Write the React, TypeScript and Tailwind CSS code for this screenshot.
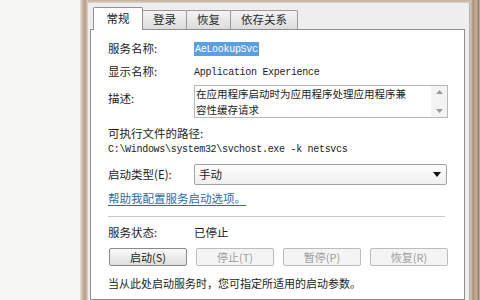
const CJK = "font-['Noto_Sans_CJK_SC','Noto_Sans',sans-serif]";
const MONO = "font-['Liberation_Mono','Noto_Sans_CJK_SC',monospace] text-[10px] tracking-[-0.3px]";

function Tab({ label, active }: { label: string; active?: boolean }) {
  if (active) {
    return (
      <div className="relative z-10 -mb-px h-[23px] w-[50px] flex items-center justify-center bg-white border border-b-0 border-[#8e8f8f] rounded-t-[2px] text-[11.5px] text-[#1b1b1b]">
        {label}
      </div>
    );
  }
  return (
    <div className="h-[19px] -ml-px px-[10px] flex items-center justify-center bg-[linear-gradient(#f4f4f4,#dcdcdc)] border border-b-0 border-[#9a9a9a] rounded-t-[2px] text-[11.5px] text-[#2a2a2a]">
      {label}
    </div>
  );
}

function Btn({ label, disabled }: { label: string; disabled?: boolean }) {
  return (
    <div
      className={`w-[78px] h-[18px] flex items-center justify-center rounded-[2px] border text-[11px] ${
        disabled
          ? 'border-[#bcbcbc] bg-[#f4f4f4] text-[#9d9d9d]'
          : 'border-[#8a8a8a] bg-[linear-gradient(#fafafa,#dedede)] text-[#1e1e1e]'
      }`}
    >
      {label}
    </div>
  );
}

export default function App() {
  return (
    <div className={`w-[480px] h-[300px] flex overflow-hidden bg-[#f8f8f6] ${CJK}`}>
      {/* desktop behind */}
      <div className="w-[80px] bg-[#f7f7f5]" />

      {/* left window frame */}
      <div className="w-[8px] bg-[linear-gradient(90deg,#e8dfd5,#c4ad98_40%,#b49b86_60%,#dcd2c6)]" />

      <div className="flex-1 flex flex-col bg-[#cdbfb0]">
        <div className="h-[3px] bg-[linear-gradient(#bfae9c,#ddd3c8)]" />
        <div className="flex-1 flex bg-[#eeeeee]">
          <div className="flex-1 flex flex-col pl-[2px] pr-[4px]">
            {/* tabs */}
            <div className="flex items-end pl-[3px] mt-[4px]">
              <Tab label="常规" active />
              <Tab label="登录" />
              <Tab label="恢复" />
              <Tab label="依存关系" />
            </div>

            {/* tab page */}
            <div className="flex-1 bg-white border border-[#8e8f8f] pl-[17px] text-[11.5px] text-[#1c1c1c]">
              <div className="flex items-center h-[16px] mt-[11px]">
                <span className="w-[86px]">服务名称:</span>
                <span className={`${MONO} bg-[#5a9fe0] text-white px-px h-[14px] flex items-center`}>AeLookupSvc</span>
              </div>

              <div className="flex items-center h-[16px] mt-[7px]">
                <span className="w-[86px]">显示名称:</span>
                <span className={MONO}>Application Experience</span>
              </div>

              <div className="flex mt-[5px]">
                <span className="w-[86px] pt-[5px]">描述:</span>
                <div className="w-[254px] h-[33px] border border-[#b8b8b8] flex">
                  <div className="flex-1 pl-[1px] text-[10.5px] leading-[16px]">
                    <div>在应用程序启动时为应用程序处理应用程序兼</div>
                    <div>容性缓存请求</div>
                  </div>
                  <div className="w-[16px] bg-[#f3f3f3] flex flex-col items-center justify-between py-[4px] text-[#9a9a9a]">
                    <svg width="7" height="4" viewBox="0 0 7 4"><path d="M0 4L3.5 0L7 4Z" fill="currentColor" /></svg>
                    <svg width="7" height="4" viewBox="0 0 7 4"><path d="M0 0L3.5 4L7 0Z" fill="currentColor" /></svg>
                  </div>
                </div>
              </div>

              <div className="h-[16px] flex items-center mt-[8px]">可执行文件的路径:</div>
              <div className={`h-[14px] flex items-center ${MONO} text-[#1c1c1c]`}>
                C:\Windows\system32\svchost.exe -k netsvcs
              </div>

              <div className="flex items-center mt-[8px]">
                <span className="w-[86px]">启动类型(E):</span>
                <div className="w-[253px] h-[21px] border border-[#a4a4a4] rounded-[2px] bg-[linear-gradient(#fdfdfd,#f0f0f0)] flex items-center pl-[4px] pr-[5px]">
                  <span className="flex-1">手动</span>
                  <svg width="8" height="5" viewBox="0 0 8 5"><path d="M0 0H8L4 5Z" fill="#111" /></svg>
                </div>
              </div>

              <div className="h-[16px] flex items-center mt-[6px]">
                <span className="text-[#2f6ba8] underline underline-offset-2">帮助我配置服务启动选项。</span>
              </div>

              <div className="w-[337px] h-px bg-[#c9c9c9] mt-[9px]" />

              <div className="flex items-center h-[16px] mt-[8px]">
                <span className="w-[86px]">服务状态:</span>
                <span>已停止</span>
              </div>

              <div className="flex gap-[9px] mt-[7px] pl-[1px]">
                <Btn label="启动(S)" />
                <Btn label="停止(T)" disabled />
                <Btn label="暂停(P)" disabled />
                <Btn label="恢复(R)" disabled />
              </div>

              <div className="h-[16px] flex items-center mt-[9px] text-[11px]">
                当从此处启动服务时，您可指定所适用的启动参数。
              </div>
            </div>
          </div>
          <div className="w-px bg-[#b9b0a6]" />
        </div>
      </div>

      {/* right window frame */}
      <div className="w-[10px] bg-[linear-gradient(90deg,#d8cdc0,#a8907a_35%,#c9b6a3_60%,#9a836e_85%,#c8b8a8)]" />
    </div>
  );
}
